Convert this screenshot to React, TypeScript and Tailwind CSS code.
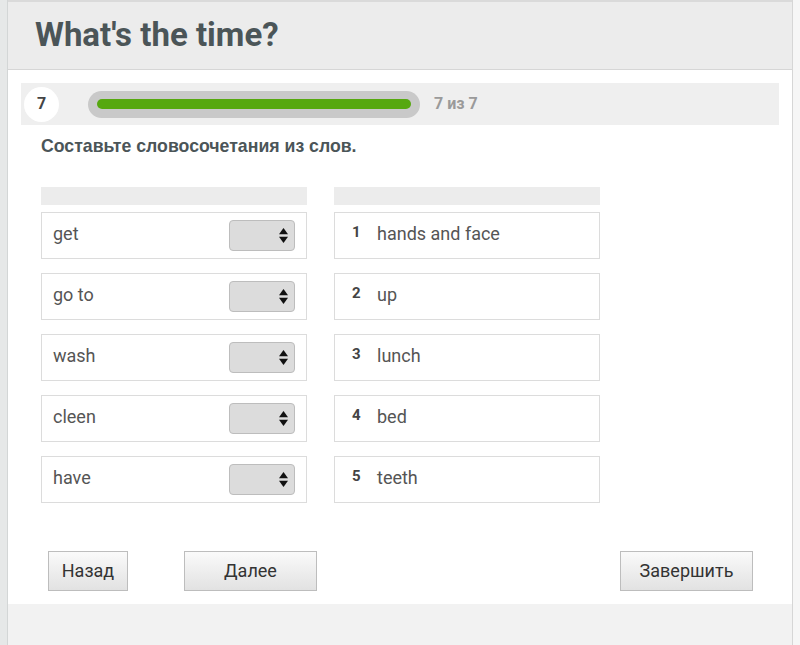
const leftWords = ['get', 'go to', 'wash', 'cleen', 'have'];
const rightWords = ['hands and face', 'up', 'lunch', 'bed', 'teeth'];

const SelectBox = () => (
  <div className="flex h-[31px] w-[66px] items-center justify-end rounded-[4px] border border-[#bdbdbd] bg-[#dcdcdc] pr-[6px]">
    <svg width="9" height="15" viewBox="0 0 9 15">
      <path d="M4.5 0 L9 6.2 L0 6.2 Z" fill="#111" />
      <path d="M4.5 15 L9 8.8 L0 8.8 Z" fill="#111" />
    </svg>
  </div>
);

const Button = ({ label, width }: { label: string; width: string }) => (
  <button
    className={`h-[40px] ${width} border border-[#bdbdbd] bg-gradient-to-b from-[#fafafa] to-[#e2e2e2] text-[18px] text-[#333]`}
  >
    {label}
  </button>
);

const App = () => {
  return (
    <div className="flex h-[645px] w-[800px] bg-white font-['Roboto',sans-serif]">
      <div className="w-[8px] border-r border-[#d3d6d6] bg-[#e6e8e8]" />
      <div className="flex flex-1 flex-col border-t-2 border-[#dadada]">
        <div className="flex h-[68px] items-center border-b border-[#d6d6d6] bg-[#ececec] pl-[27px]">
          <h1 className="text-[33px] font-bold text-[#4b5558] leading-none pb-[2px]">
            What's the time?
          </h1>
        </div>
        <div className="flex-1 px-[13px] pt-[13px]">
          <div className="flex h-[42px] items-center bg-[#efefef] pl-[3px]">
            <div className="flex h-[35px] w-[35px] items-center justify-center rounded-full bg-white text-[16px] font-bold text-[#444]">
              7
            </div>
            <div className="ml-[29px] flex h-[27px] w-[332px] items-center rounded-full bg-[#c9c9c9] px-[9px]">
              <div className="h-[10px] w-full rounded-full bg-[#56a80f]" />
            </div>
            <span className="ml-[14px] text-[16px] font-bold text-[#9a9a9a]">7 из 7</span>
          </div>
          <div className="px-[20px]">
            <p className="mt-[8px] font-['Liberation_Sans',sans-serif] text-[17.7px] font-bold text-[#4b5558]">
              Составьте словосочетания из слов.
            </p>
            <div className="mt-[27px] flex gap-[27px]">
              <div className="flex w-[266px] flex-col gap-[14px]">
                <div className="h-[18px] bg-[#ececec] -mb-[7px]" />
                {leftWords.map((w) => (
                  <div
                    key={w}
                    className="flex h-[47px] items-center justify-between border border-[#dcdcdc] pl-[11px] pr-[11px]"
                  >
                    <span className="pb-[4px] text-[18px] text-[#555]">{w}</span>
                    <SelectBox />
                  </div>
                ))}
              </div>
              <div className="flex w-[266px] flex-col gap-[14px]">
                <div className="h-[18px] bg-[#ececec] -mb-[7px]" />
                {rightWords.map((w, i) => (
                  <div
                    key={w}
                    className="flex h-[47px] items-center border border-[#dcdcdc] pl-[17px]"
                  >
                    <span className="w-[25px] pb-[6px] text-[15px] font-bold text-[#444]">{i + 1}</span>
                    <span className="pb-[4px] text-[18px] text-[#555]">{w}</span>
                  </div>
                ))}
              </div>
            </div>
          </div>
          <div className="mt-[48px] flex items-center pl-[27px] pr-[26px]">
            <Button label="Назад" width="w-[80px]" />
            <div className="ml-[56px]">
              <Button label="Далее" width="w-[133px]" />
            </div>
            <div className="ml-auto">
              <Button label="Завершить" width="w-[133px]" />
            </div>
          </div>
        </div>
        <div className="h-[41px] bg-[#f2f2f2]" />
      </div>
      <div className="w-[8px] border-l border-[#d6d6d6] bg-[#f6f6f6]" />
    </div>
  );
};

export default App;
